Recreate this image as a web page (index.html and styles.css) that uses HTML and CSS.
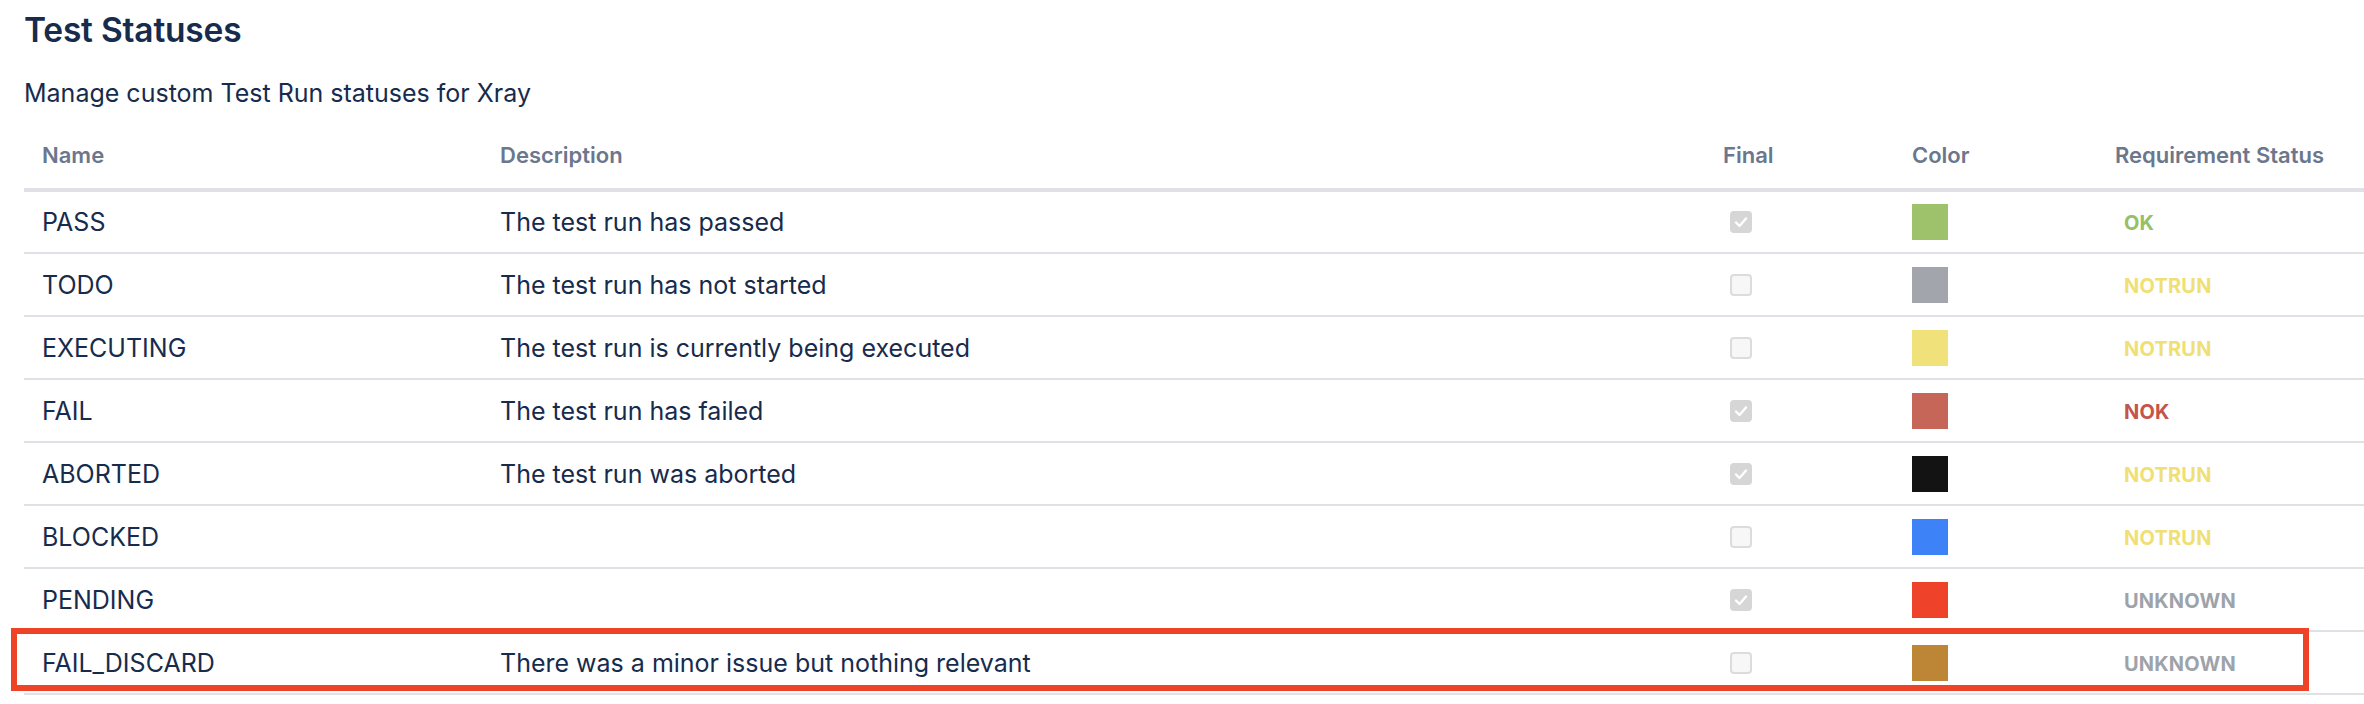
FILE: index.html
```html
<!DOCTYPE html>
<html lang="en">
<head>
<meta charset="utf-8">
<title>Test Statuses</title>
<link rel="stylesheet" href="styles.css">
</head>
<body>
<main class="page">
  <h1 class="title">Test Statuses</h1>
  <p class="subtitle">Manage custom Test Run statuses for Xray</p>
  <div class="table-wrap">
    <table class="statuses">
      <colgroup>
        <col class="c-name"><col class="c-desc"><col class="c-final"><col class="c-color"><col class="c-req">
      </colgroup>
      <thead>
        <tr><th>Name</th><th>Description</th><th>Final</th><th>Color</th><th>Requirement Status</th></tr>
      </thead>
      <tbody>
        <tr>
          <td>PASS</td><td>The test run has passed</td>
          <td><span class="cb checked"><svg viewBox="0 0 22 22"><path d="M6 11.5l3.5 3.5L16 7.5" /></svg></span></td>
          <td><span class="swatch" style="background:#9dc26b"></span></td>
          <td><span class="lozenge ok">OK</span></td>
        </tr>
        <tr>
          <td>TODO</td><td>The test run has not started</td>
          <td><span class="cb"></span></td>
          <td><span class="swatch" style="background:#a2a5ab"></span></td>
          <td><span class="lozenge notrun">NOTRUN</span></td>
        </tr>
        <tr>
          <td>EXECUTING</td><td>The test run is currently being executed</td>
          <td><span class="cb"></span></td>
          <td><span class="swatch" style="background:#f1e17b"></span></td>
          <td><span class="lozenge notrun">NOTRUN</span></td>
        </tr>
        <tr>
          <td>FAIL</td><td>The test run has failed</td>
          <td><span class="cb checked"><svg viewBox="0 0 22 22"><path d="M6 11.5l3.5 3.5L16 7.5" /></svg></span></td>
          <td><span class="swatch" style="background:#c66659"></span></td>
          <td><span class="lozenge nok">NOK</span></td>
        </tr>
        <tr>
          <td>ABORTED</td><td>The test run was aborted</td>
          <td><span class="cb checked"><svg viewBox="0 0 22 22"><path d="M6 11.5l3.5 3.5L16 7.5" /></svg></span></td>
          <td><span class="swatch" style="background:#131313"></span></td>
          <td><span class="lozenge notrun">NOTRUN</span></td>
        </tr>
        <tr>
          <td>BLOCKED</td><td></td>
          <td><span class="cb"></span></td>
          <td><span class="swatch" style="background:#3e82f7"></span></td>
          <td><span class="lozenge notrun">NOTRUN</span></td>
        </tr>
        <tr>
          <td>PENDING</td><td></td>
          <td><span class="cb checked"><svg viewBox="0 0 22 22"><path d="M6 11.5l3.5 3.5L16 7.5" /></svg></span></td>
          <td><span class="swatch" style="background:#ee432a"></span></td>
          <td><span class="lozenge unknown">UNKNOWN</span></td>
        </tr>
        <tr>
          <td>FAIL_DISCARD</td><td>There was a minor issue but nothing relevant</td>
          <td><span class="cb"></span></td>
          <td><span class="swatch" style="background:#bd8536"></span></td>
          <td><span class="lozenge unknown">UNKNOWN</span></td>
        </tr>
      </tbody>
    </table>
    <div class="highlight"></div>
  </div>
</main>
</body>
</html>
```

FILE: styles.css
```css
* { box-sizing: border-box; }

html, body {
  margin: 0;
  padding: 0;
  background: #ffffff;
}

body {
  font-family: Inter, "Noto Sans", "Liberation Sans", sans-serif;
  color: #172b4d;
}

.page {
  padding: 10px 0 0 24px;
}

.title {
  margin: 0;
  font-size: 33.5px;
  line-height: 40px;
  font-weight: 600;
  color: #172b4d;
  letter-spacing: -0.2px;
}

.subtitle {
  margin: 26px 0 0 0;
  font-size: 25px;
  line-height: 34px;
  font-weight: 400;
  color: #172b4d;
}

.table-wrap {
  position: relative;
  margin-top: 12px;
}

.statuses {
  width: 2340px;
  border-collapse: collapse;
  table-layout: fixed;
}

.c-name { width: 458px; }
.c-desc { width: 1223px; }
.c-final { width: 189px; }
.c-color { width: 203px; }
.c-req { width: 267px; }

.statuses th {
  text-align: left;
  font-size: 22px;
  font-weight: 600;
  color: #6b778c;
  line-height: 30px;
  padding: 18px 0 18px 18px;
  border-bottom: 4px solid #dfe1e6;
}

.statuses td {
  height: 63px;
  font-size: 25px;
  line-height: 32px;
  padding: 0 0 0 18px;
  vertical-align: middle;
  border-bottom: 2px solid #dfe1e6;
  color: #172b4d;
}

.cb {
  display: block;
  width: 22px;
  height: 22px;
  margin-left: 7px;
  border-radius: 4px;
  background: #f7f7f7;
  border: 2px solid #dcdcdc;
}

.cb.checked {
  background: #d6d6d6;
  border-color: #d6d6d6;
}

.cb svg {
  display: block;
  width: 22px;
  height: 22px;
  margin: -2px 0 0 -2px;
}

.cb svg path {
  fill: none;
  stroke: #ffffff;
  stroke-width: 2.4;
  stroke-linecap: round;
  stroke-linejoin: round;
}

.swatch {
  display: block;
  width: 36px;
  height: 36px;
}

.lozenge {
  display: inline-block;
  padding-left: 9px;
  font-size: 20px;
  font-weight: 700;
  letter-spacing: 0.2px;
  text-transform: uppercase;
}

.lozenge.ok { color: #95c063; }
.lozenge.notrun { color: #f0df72; }
.lozenge.nok { color: #c5544a; }
.lozenge.unknown { color: #9ea3aa; }

.highlight {
  position: absolute;
  left: -13px;
  bottom: 4px;
  width: 2298px;
  height: 63px;
  border: 6px solid #ee4327;
  pointer-events: none;
}
```
